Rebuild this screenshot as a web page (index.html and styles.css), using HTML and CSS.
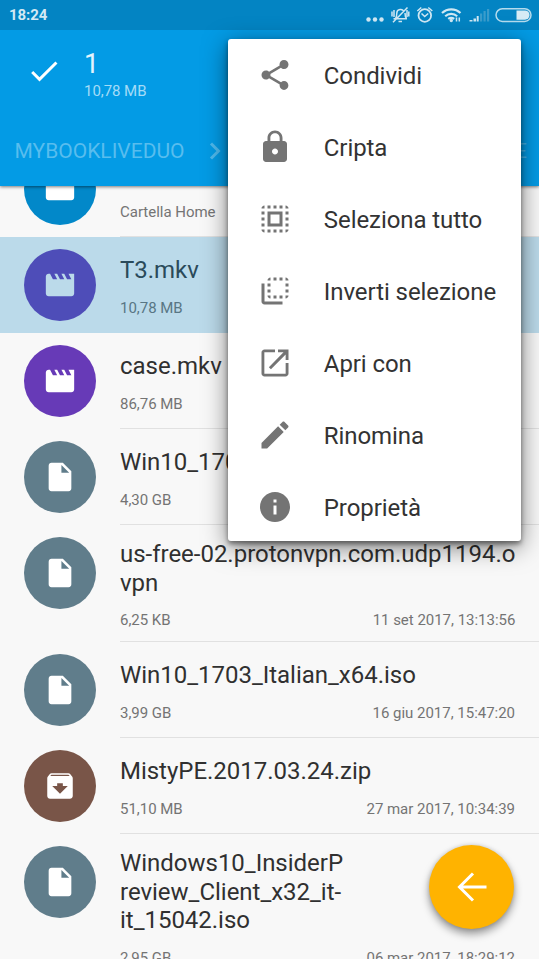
FILE: index.html
```html
<!DOCTYPE html>
<html lang="it">
<head>
<meta charset="utf-8">
<title>File</title>
<link rel="stylesheet" href="styles.css">
</head>
<body>
<svg class="defs" width="0" height="0">
  <symbol id="file" viewBox="0 0 24 24"><path d="M13 9h5.500L13 3.500V9M6 2h8l6 6v12a2 2 0 0 1-2 2H6a2 2 0 0 1-2-2V4c0-1.110.890-2 2-2z"/></symbol>
  <symbol id="movie" viewBox="0 0 24 24"><path d="M18 4l2 4h-3l-2-4h-2l2 4h-3l-2-4H8l2 4H7L5 4H4c-1.100 0-2 .900-2 2v12c0 1.100.900 2 2 2h16c1.100 0 2-.900 2-2V4h-4z"/></symbol>
  <symbol id="archive" viewBox="0 0 24 24"><path d="M20.540 5.230l-1.390-1.680C18.880 3.210 18.470 3 18 3H6c-.470 0-.880.210-1.160.550L3.460 5.230C3.170 5.570 3 6.020 3 6.500V19c0 1.100.900 2 2 2h14c1.100 0 2-.900 2-2V6.500c0-.480-.170-.930-.460-1.270zM12 17.500L6.500 12H10v-2h4v2h3.500L12 17.500zM5.120 5l.810-1h12l.940 1H5.120z"/></symbol>
  <symbol id="folder" viewBox="0 0 24 24"><path d="M10 4H4c-1.100 0-2 .900-2 2v12c0 1.100.900 2 2 2h16c1.100 0 2-.900 2-2V8c0-1.100-.900-2-2-2h-8z"/></symbol>
</svg>
<div class="screen">
  <header class="top">
    <div class="status">
      <span class="clock">18:24</span>
      <svg class="status-icons" width="175" height="30" viewBox="0 0 175 30">
        <g fill="#cfe7f3"><circle cx="4.500" cy="19.500" r="2.200"/><circle cx="11" cy="19.500" r="2.200"/><circle cx="17.500" cy="19.500" r="2.200"/></g>
        <g fill="none" stroke="#cfe7f3" stroke-width="1.500">
          <path d="M29.500 18.800h13.500M31.500 18.500c1.300-1.500 1.300-3 1.300-5.500a3.700 3.700 0 0 1 7.200-1M41 13c0 2.500.200 4 1.500 5.500M34.500 21.500h3.500M29 22.300L43.500 7.500"/>
          <path d="M28 11.500v5M30 10v7M44.800 11.500v5M43 10v7"/>
          <circle cx="60.800" cy="15.500" r="6.300" stroke-width="1.800"/><path d="M57.500 13.500l3.200 3 3.500-3M53.300 11l4-3.500M68.300 11l-4-3.500"/>
        </g>
        <g fill="none" stroke="#cfe7f3" stroke-width="2.200">
          <path d="M78 13a13.500 13.500 0 0 1 18.500 0M81.200 16.200a9 9 0 0 1 12 0M84.200 18.900a5 5 0 0 1 6 0"/>
          <path d="M92.500 17.500v4M95.300 17.500v4" stroke-width="1.500"/>
        </g>
        <circle cx="87.300" cy="20.500" r="1.700" fill="#cfe7f3"/>
        <path d="M105.500 20h3v1.500h-3zM109.500 18.500h2.500v3h-2.500zM112.700 16h2v5.500h-2z" fill="#cfe7f3"/>
        <path d="M116 13.500h2.200v8H116zM119.500 11h2.200v10.500h-2.200zM123 9h2.200v12.500H123z" fill="#3a9ccb"/>
        <rect x="132" y="8.800" width="35" height="12.600" rx="6.300" fill="none" stroke="#b5dbed" stroke-width="1.500"/>
        <path d="M152.500 10.500h8.500a4.600 4.600 0 0 1 0 9.200h-8.500z" fill="#d6ebf5"/>
      </svg>
    </div>
    <div class="selection">
      <svg class="check" width="36" height="36" viewBox="0 0 24 24"><path d="M9 16.170L4.830 12l-1.420 1.410L9 19 21 7l-1.410-1.410z" fill="#fff"/></svg>
      <div class="summary"><div class="count">1</div><div class="total">10,78 MB</div></div>
    </div>
    <nav class="crumbs">
      <span>MYBOOKLIVEDUO</span>
      <svg width="12" height="18" viewBox="0 0 12 18"><path d="M2 1.500L9.500 9 2 16.500" fill="none" stroke="#4fb9ec" stroke-width="3"/></svg>
      <span class="last">E</span>
    </nav>
  </header>

  <main class="list">
    <div class="row"><div class="avatar blue"><svg><use href="#folder"/></svg></div><div class="body"><div class="name">home</div><div class="meta"><span>Cartella Home</span></div></div></div>
    <div class="row selected"><div class="avatar indigo"><svg><use href="#movie"/></svg></div><div class="body"><div class="name">T3.mkv</div><div class="meta"><span>10,78 MB</span></div></div></div>
    <div class="row"><div class="avatar purple"><svg><use href="#movie"/></svg></div><div class="body"><div class="name">case.mkv</div><div class="meta"><span>86,76 MB</span></div></div></div>
    <div class="row"><div class="avatar"><svg><use href="#file"/></svg></div><div class="body"><div class="name">Win10_1703</div><div class="meta"><span>4,30 GB</span></div></div></div>
    <div class="row multi"><div class="avatar"><svg><use href="#file"/></svg></div><div class="body"><div class="name">us-free-02.protonvpn.com.udp1194.o<br>vpn</div><div class="meta"><span>6,25 KB</span><span>11 set 2017, 13:13:56</span></div></div></div>
    <div class="row"><div class="avatar"><svg><use href="#file"/></svg></div><div class="body"><div class="name">Win10_1703_Italian_x64.iso</div><div class="meta"><span>3,99 GB</span><span>16 giu 2017, 15:47:20</span></div></div></div>
    <div class="row"><div class="avatar brown"><svg><use href="#archive"/></svg></div><div class="body"><div class="name">MistyPE.2017.03.24.zip</div><div class="meta"><span>51,10 MB</span><span>27 mar 2017, 10:34:39</span></div></div></div>
    <div class="row multi tall"><div class="avatar"><svg><use href="#file"/></svg></div><div class="body"><div class="name">Windows10_InsiderP<br>review_Client_x32_it-<br>it_15042.iso</div><div class="meta"><span>2,95 GB</span><span>06 mar 2017, 18:29:12</span></div></div></div>
  </main>

  <div class="fab"><svg width="36" height="36" viewBox="0 0 36 36"><path d="M32.500 18H5.500M19 4.500L5.500 18 19 31.500" fill="none" stroke="#fff" stroke-width="3"/></svg></div>

  <div class="menu">
    <div class="item"><svg viewBox="0 0 24 24"><path d="M18 16.080c-.760 0-1.440.300-1.960.770L8.910 12.700c.050-.230.090-.460.090-.700s-.040-.470-.090-.700l7.050-4.110c.540.500 1.250.810 2.040.810 1.660 0 3-1.340 3-3s-1.340-3-3-3-3 1.340-3 3c0 .240.040.470.090.700L8.040 9.810C7.500 9.310 6.790 9 6 9c-1.660 0-3 1.340-3 3s1.340 3 3 3c.790 0 1.500-.310 2.040-.810l7.120 4.160c-.050.210-.080.430-.080.650 0 1.610 1.310 2.920 2.920 2.920s2.920-1.310 2.920-2.920-1.310-2.920-2.920-2.920z"/></svg><span>Condividi</span></div>
    <div class="item"><svg viewBox="0 0 24 24"><path d="M18 8h-1V6c0-2.760-2.240-5-5-5S7 3.240 7 6v2H6c-1.100 0-2 .900-2 2v10c0 1.100.900 2 2 2h12c1.100 0 2-.900 2-2V10c0-1.100-.900-2-2-2zm-6 9c-1.100 0-2-.900-2-2s.900-2 2-2 2 .900 2 2-.900 2-2 2zm3.100-9H8.900V6c0-1.710 1.390-3.100 3.100-3.100s3.100 1.390 3.100 3.100v2z"/></svg><span>Cripta</span></div>
    <div class="item"><svg viewBox="0 0 24 24"><path d="M3 5h2V3c-1.100 0-2 .900-2 2zm0 8h2v-2H3v2zm4 8h2v-2H7v2zM3 9h2V7H3v2zm10-6h-2v2h2V3zm6 0v2h2c0-1.100-.900-2-2-2zM5 21v-2H3c0 1.100.900 2 2 2zm-2-4h2v-2H3v2zM9 3H7v2h2V3zm2 18h2v-2h-2v2zm8-8h2v-2h-2v2zm0 8c1.100 0 2-.900 2-2h-2v2zm0-12h2V7h-2v2zm0 8h2v-2h-2v2zm-4 4h2v-2h-2v2zm0-16h2V3h-2v2zM7 17h10V7H7v10zm2-8h6v6H9V9z"/></svg><span>Seleziona tutto</span></div>
    <div class="item"><svg viewBox="0 0 24 24"><path d="M9 7H7v2h2V7zm0 4H7v2h2v-2zm0-8c-1.110 0-2 .900-2 2h2V3zm4 12h-2v2h2v-2zm6-12v2h2c0-1.100-.900-2-2-2zm-6 0h-2v2h2V3zM9 17v-2H7c0 1.100.890 2 2 2zm10-4h2v-2h-2v2zm0-4h2V7h-2v2zm0 8c1.100 0 2-.900 2-2h-2v2zM5 7H3v12c0 1.100.890 2 2 2h12v-2H5V7zm10-2h2V3h-2v2zm0 12h2v-2h-2v2z"/></svg><span>Inverti selezione</span></div>
    <div class="item"><svg viewBox="0 0 24 24"><path d="M12 3v1.900H4.900v14.200h14.200V12H21v7c0 1.100-.900 2-2 2H5c-1.100 0-2-.900-2-2V5c0-1.100.900-2 2-2zM14 3h7v7h-1.900V6.300L9.300 16.200 7.900 14.800 17.700 4.900H14z"/></svg><span>Apri con</span></div>
    <div class="item"><svg viewBox="0 0 24 24"><path d="M3 17.250V21h3.750L17.810 9.940l-3.750-3.750L3 17.250zM20.710 7.040c.390-.390.390-1.020 0-1.410l-2.340-2.340c-.390-.390-1.020-.390-1.410 0l-1.830 1.830 3.750 3.750 1.830-1.830z"/></svg><span>Rinomina</span></div>
    <div class="item"><svg viewBox="0 0 24 24"><path d="M12 2C6.480 2 2 6.480 2 12s4.480 10 10 10 10-4.480 10-10S17.520 2 12 2zm1 15h-2v-6h2v6zm0-8h-2V7h2v2z"/></svg><span>Proprietà</span></div>
  </div>
</div>
</body>
</html>
```
FILE: styles.css
```css
* { box-sizing: border-box; }
body { margin: 0; font-family: Roboto, sans-serif; }
svg { display: block; flex: none; }
.defs { position: absolute; }
.screen { position: relative; width: 539px; height: 959px; overflow: hidden; background: #f8f8f8; }

.top { position: relative; z-index: 1; height: 186px; background: #039be5; box-shadow: 0 1px 3px rgba(0,0,0,.5); }
.status { display: flex; justify-content: space-between; align-items: center; height: 30px; padding-left: 9px; background: #0384c3; }
.clock { font-size: 15px; font-weight: 700; color: #d3e9f4; line-height: 30px; letter-spacing: -.1px; }
.selection { display: flex; height: 84px; padding: 20px 0 0 26px; }
.check { margin-top: 3px; }
.summary { margin-left: 22px; }
.count { height: 32px; padding-top: 1px; font-size: 27px; line-height: 27px; color: #e3f4fd; }
.total { font-size: 15px; line-height: 18px; letter-spacing: -.05px; color: #a5dbf7; }
.crumbs { display: flex; align-items: center; height: 72px; padding: 1px 12px 0 14.500px; font-size: 21px; color: #58bdee; }
.crumbs svg { margin-left: 24px; }
.last { margin-left: auto; opacity: .75; }

.list { margin-top: -45px; }
.row { display: flex; height: 96px; padding: 12px 0 0 24px; }
.row.multi { height: 117px; }
.row.tall { height: 146px; }
.row.selected { background: #bbdaea; }
.avatar { display: flex; align-items: center; justify-content: center; flex: none; width: 72px; height: 72px; margin-top: -.5px; border-radius: 50%; background: #607d8b; }
.avatar svg { width: 34px; height: 34px; fill: #fff; }
.blue { background: #0288c9; }
.indigo { background: #4e4db8; }
.indigo svg { fill: #bbdaea; }
.purple { background: #673ab7; }
.brown { background: #795548; }
.body { flex: 1; margin: -12px 0 0 24px; padding: 19px 24px 0 0; border-bottom: 1px solid #e1e1e1; }
.multi .body { padding-top: 15px; }
.name { font-size: 24px; line-height: 28.500px; letter-spacing: -.02px; color: #303030; white-space: nowrap; }
.meta { display: flex; justify-content: space-between; margin-top: 14px; font-size: 15px; line-height: 18px; letter-spacing: -.02px; color: #747474; }
.selected .name { color: #2a4a5a; }
.selected .meta { color: #587684; }
.selected .body { border-color: #bbdaea; }

.fab { position: absolute; left: 429px; top: 845px; display: flex; align-items: center; justify-content: center; width: 85px; height: 84px; border-radius: 50%; background: #ffb300; box-shadow: 0 5px 9px rgba(0,0,0,.4), 0 0 4px rgba(0,0,0,.15); }

.menu { position: absolute; z-index: 2; left: 227.500px; top: 39px; width: 293.500px; height: 502px; border-radius: 3px; background: #fff; box-shadow: 0 3px 5px rgba(0,0,0,.45), 0 6px 24px rgba(0,0,0,.5); }
.item { display: flex; align-items: center; height: 72px; padding-left: 29.800px; font-size: 24px; letter-spacing: -.07px; color: #333; }
.item svg { width: 36px; height: 36px; margin-right: 30.500px; fill: #747474; }
.item span { padding-top: 2px; }
```
